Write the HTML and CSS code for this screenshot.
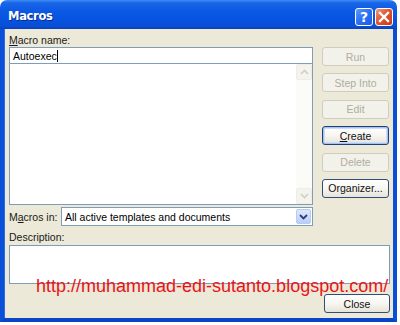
FILE: index.html
```html
<!DOCTYPE html>
<html>
<head>
<meta charset="utf-8">
<link rel="stylesheet" href="styles.css">
</head>
<body>
<div class="window">
  <div class="titlebar">
    <span class="title">Macros</span>
    <div class="tbtns">
      <div class="tb help">?</div>
      <div class="tb close">
        <svg width="12" height="12" viewBox="0 0 12 12"><path d="M2 2 L10 10 M10 2 L2 10" stroke="#fff" stroke-width="2.4" stroke-linecap="square"/></svg>
      </div>
    </div>
  </div>
  <div class="client">
    <div class="upper">
      <div class="leftcol">
        <div class="label"><u>M</u>acro name:</div>
        <div class="namebox">Autoexec<span class="caret"></span></div>
        <div class="listbox">
          <div class="listarea"></div>
          <div class="vscroll">
            <div class="sbtn"><svg width="9" height="6" viewBox="0 0 9 6"><path d="M1 5 L4.5 1.5 L8 5" fill="none" stroke="#d0d0c8" stroke-width="1.6"/></svg></div>
            <div class="strack"></div>
            <div class="sbtn"><svg width="9" height="6" viewBox="0 0 9 6"><path d="M1 1 L4.5 4.5 L8 1" fill="none" stroke="#d0d0c8" stroke-width="1.6"/></svg></div>
          </div>
        </div>
        <div class="inrow">
          <div class="label inlabel">M<u>a</u>cros in:</div>
          <div class="combo">
            <span class="combotext">All active templates and documents</span>
            <div class="cbtn"><svg width="9" height="6" viewBox="0 0 9 6"><path d="M1 1 L4.5 4.5 L8 1" fill="none" stroke="#2d3e78" stroke-width="1.8"/></svg></div>
          </div>
        </div>
      </div>
      <div class="btncol">
        <div class="btn disabled">Run</div>
        <div class="btn disabled">Step Into</div>
        <div class="btn disabled">Edit</div>
        <div class="btn default"><u>C</u>reate</div>
        <div class="btn disabled">Delete</div>
        <div class="btn">Organizer...</div>
      </div>
    </div>
    <div class="label desclabel">Description:</div>
    <div class="descbox"></div>
    <div class="bottomrow">
      <div class="btn closebtn">Close</div>
    </div>
    <div class="watermark">http://muhammad-edi-sutanto.blogspot.com/</div>
  </div>
</div>
</body>
</html>
```
FILE: styles.css
```css
html, body {
  margin: 0;
  padding: 0;
  background: #ffffff;
  width: 400px;
  height: 325px;
  overflow: hidden;
}
.window {
  width: 397px;
  height: 322px;
  display: flex;
  flex-direction: column;
  font-family: "Liberation Sans", Arial, sans-serif;
  font-size: 10.5px;
  color: #000;
}
.titlebar {
  height: 29px;
  flex: none;
  border-radius: 7px 7px 0 0;
  background: linear-gradient(to bottom, #3d8cf5 0%, #1a66e8 10%, #0a58e4 40%, #0553e0 70%, #0a4ed6 90%, #0842b8 100%);
  display: flex;
  align-items: center;
  justify-content: space-between;
  padding: 0 4px 0 8px;
}
.title {
  color: #fff;
  font-weight: bold;
  font-size: 11.5px;
  font-family: "DejaVu Sans", "Liberation Sans", sans-serif;
  letter-spacing: -0.3px;
  text-shadow: 1px 1px 0 #0a2a8a;
  margin-top: 3px;
}
.tbtns {
  display: flex;
  gap: 2px;
  margin-top: 5px;
}
.tb {
  width: 18px;
  height: 18px;
  box-sizing: border-box;
  border: 1px solid #fff;
  border-radius: 3px;
  display: flex;
  align-items: center;
  justify-content: center;
}
.help {
  background: linear-gradient(135deg, #5a9aff 0%, #2a6ff0 50%, #1c5ee8 100%);
  color: #fff;
  font-weight: bold;
  font-size: 14px;
  font-family: "DejaVu Sans", sans-serif;
}
.close {
  background: linear-gradient(135deg, #f19a7e 0%, #e0562f 45%, #c8381a 100%);
}
.client {
  flex: 1;
  position: relative;
  background: #ece9d8;
  border-left: 4px solid #0a4fd8;
  border-right: 4px solid #0a4fd8;
  border-bottom: 4px solid #0a45c8;
  box-shadow: inset 1px 0 0 #2a6ae8;
  padding: 4px 4px 0 5px;
  display: flex;
  flex-direction: column;
}
.upper {
  display: flex;
  gap: 9px;
}
.leftcol {
  width: 304px;
  display: flex;
  flex-direction: column;
}
.label {
  height: 14px;
  line-height: 14px;
  color: #1a1a1a;
}
.namebox {
  height: 17px;
  box-sizing: border-box;
  border: 1px solid #7f9db9;
  background: #fff;
  padding: 1px 3px;
  line-height: 14px;
  margin-top: 0;
  display: flex;
  align-items: center;
}
.caret {
  display: inline-block;
  width: 1px;
  height: 12px;
  background: #000;
  margin-left: 0;
}
.listbox {
  height: 141px;
  box-sizing: border-box;
  border: 1px solid #7f9db9;
  border-top: none;
  background: #fff;
  display: flex;
}
.listarea {
  flex: 1;
}
.vscroll {
  width: 16px;
  display: flex;
  flex-direction: column;
  background: #fbfbf8;
}
.sbtn {
  height: 16px;
  box-sizing: border-box;
  border: 1px solid #eeede5;
  border-radius: 2px;
  background: #f4f3ee;
  display: flex;
  align-items: center;
  justify-content: center;
}
.strack {
  flex: 1;
}
.inrow {
  display: flex;
  align-items: center;
  margin-top: 2px;
  gap: 0;
}
.inlabel {
  width: 52px;
}
.combo {
  flex: 1;
  height: 19px;
  box-sizing: border-box;
  border: 1px solid #7f9db9;
  background: #fff;
  display: flex;
  align-items: center;
  padding: 0 1px 0 3px;
}
.combotext {
  flex: 1;
}
.cbtn {
  width: 15px;
  height: 15px;
  box-sizing: border-box;
  border: 1px solid #b8cbf3;
  border-radius: 2px;
  background: linear-gradient(to bottom, #dde8fe, #b8cdfa);
  display: flex;
  align-items: center;
  justify-content: center;
}
.btncol {
  width: 67px;
  display: flex;
  flex-direction: column;
  gap: 7.4px;
  padding-top: 14px;
}
.btn {
  height: 19px;
  box-sizing: border-box;
  border: 1px solid #2f4f7a;
  border-radius: 3px;
  background: linear-gradient(to bottom, #ffffff 0%, #f7f6f1 50%, #e6e3d8 100%);
  display: flex;
  align-items: center;
  justify-content: center;
  color: #111;
}
.btn.disabled {
  border-color: #cfcdc0;
  background: #f3f2ea;
  color: #b0ad9f;
}
.btn.default {
  border-color: #1f3f7a;
  box-shadow: inset 0 0 0 1px #a8c2f0, inset 0 0 0 2px #cddcf7;
}
.desclabel {
  margin-top: 4px;
}
.descbox {
  height: 39px;
  width: 381px;
  box-sizing: border-box;
  border: 1px solid #7f9db9;
  background: #fff;
  margin-top: 1px;
}
.bottomrow {
  display: flex;
  justify-content: flex-end;
  margin-top: 10px;
  padding-right: 0;
  width: 381px;
}
.closebtn {
  width: 66px;
}
.watermark {
  position: absolute;
  left: 32px;
  top: 247px;
  font-family: "Liberation Sans", Arial, sans-serif;
  font-size: 18px;
  line-height: 20px;
  color: #e8141a;
  white-space: nowrap;
}
```
